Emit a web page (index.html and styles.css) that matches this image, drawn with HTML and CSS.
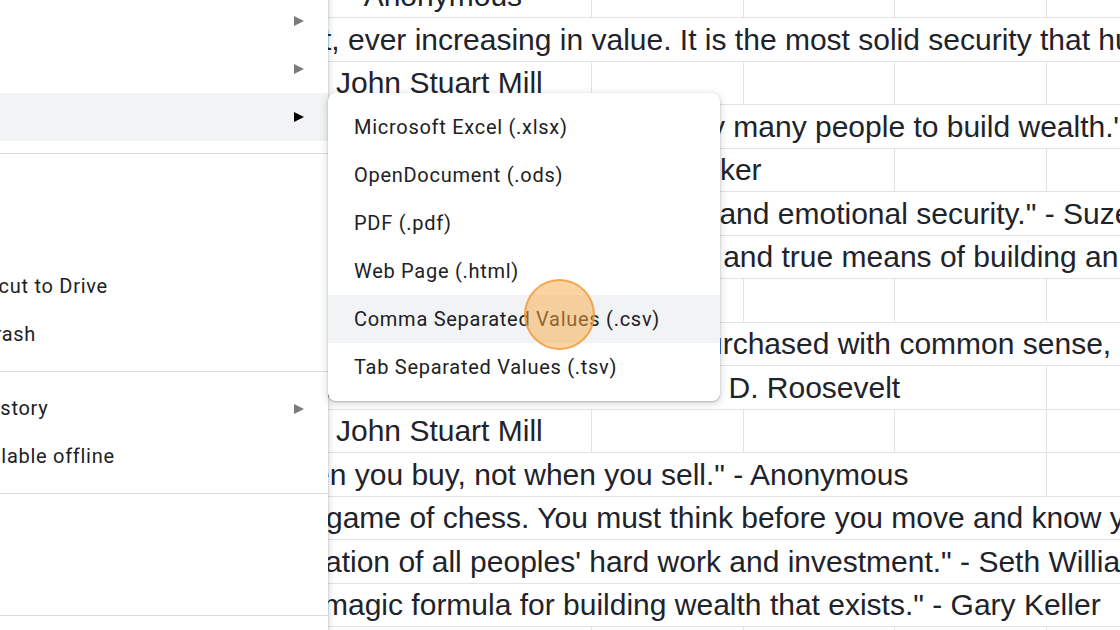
FILE: index.html
```html
<!DOCTYPE html>
<html lang="en">
<head>
<meta charset="utf-8">
<title>File menu – Download</title>
<link rel="stylesheet" href="styles.css">
</head>
<body>
<div class="app">
  <nav class="menu">
    <div class="sep"></div>
    <div class="item"><span>Share</span><svg class="arrow" viewBox="0 0 10 10"><polygon points="0,0 10,5 0,10"/></svg></div>
    <div class="item"><span>Email</span><svg class="arrow" viewBox="0 0 10 10"><polygon points="0,0 10,5 0,10"/></svg></div>
    <div class="item active"><span>Download</span><svg class="arrow" viewBox="0 0 10 10"><polygon points="0,0 10,5 0,10"/></svg></div>
    <div class="sep"></div>
    <div class="item"><span>Rename</span></div>
    <div class="item"><span>Move</span></div>
    <div class="item"><span>Add shortcut to Drive</span></div>
    <div class="item"><span>Move to trash</span></div>
    <div class="sep"></div>
    <div class="item"><span>Version history</span><svg class="arrow" viewBox="0 0 10 10"><polygon points="0,0 10,5 0,10"/></svg></div>
    <div class="item"><span>Make available offline</span></div>
    <div class="sep"></div>
    <div class="item"><span>Details</span></div>
    <div class="item"><span>Settings</span></div>
    <div class="sep"></div>
    <div class="item"><span>Print</span></div>
  </nav>

  <main class="sheet">
    <div class="row"><div class="cell s1"><span class="txt">" - Anonymous</span></div><div class="cell"></div><div class="cell"></div><div class="cell"></div><div class="cell"></div></div>
    <div class="row"><div class="cell s5"><span class="txt sh5">t, ever increasing in value. It is the most solid security that human ingenuity has devised." - Russell Sage</span></div></div>
    <div class="row"><div class="cell s1"><span class="txt pad8">John Stuart Mill</span></div><div class="cell"></div><div class="cell"></div><div class="cell"></div><div class="cell"></div></div>
    <div class="row"><div class="cell s5"><span class="txt">te investing has been used by many people to build wealth." - Robert Allen</span></div></div>
    <div class="row"><div class="cell s3"><span class="txt">may build wealth." - T. Harv Eker</span></div><div class="cell"></div><div class="cell"></div></div>
    <div class="row"><div class="cell s5"><span class="txt sh5">alth – both financial affluence and emotional security." - Suze Orman</span></div></div>
    <div class="row"><div class="cell s5"><span class="txt">y small scale, remains a tried and true means of building an individual's cash flow and wealth." - Robert Kiyosaki</span></div></div>
    <div class="row"><div class="cell"></div><div class="cell"></div><div class="cell"></div><div class="cell"></div><div class="cell"></div></div>
    <div class="row"><div class="cell s5"><span class="txt">nor can it be carried away. Purchased with common sense, paid for in full, and managed with reasonable care, it is about the safest investment in the world."</span></div></div>
    <div class="row"><div class="cell s4"><span class="txt sh2">safest in the world." - Franklin D. Roosevelt</span></div><div class="cell"></div></div>
    <div class="row"><div class="cell s1"><span class="txt pad8">John Stuart Mill</span></div><div class="cell"></div><div class="cell"></div><div class="cell"></div><div class="cell"></div></div>
    <div class="row"><div class="cell s4"><span class="txt sh15">en you buy, not when you sell." - Anonymous</span></div><div class="cell"></div></div>
    <div class="row"><div class="cell s5"><span class="txt sh2">game of chess. You must think before you move and know your next steps."</span></div></div>
    <div class="row"><div class="cell s5"><span class="txt sh3">ation of all peoples' hard work and investment." - Seth Williams</span></div></div>
    <div class="row"><div class="cell s5"><span class="txt sh5">magic formula for building wealth that exists." - Gary Keller</span></div></div>
    <div class="row"><div class="cell"></div><div class="cell"></div><div class="cell"></div><div class="cell"></div><div class="cell"></div></div>
  </main>

  <div class="submenu">
    <div class="sub-item">Microsoft Excel (.xlsx)</div>
    <div class="sub-item">OpenDocument (.ods)</div>
    <div class="sub-item">PDF (.pdf)</div>
    <div class="sub-item">Web Page (.html)</div>
    <div class="sub-item active">Comma Separated Values (.csv)</div>
    <div class="sub-item">Tab Separated Values (.tsv)</div>
  </div>

  <div class="click"></div>
</div>
</body>
</html>
```

FILE: styles.css
```css
* { box-sizing: border-box; }

html, body {
  margin: 0;
  padding: 0;
  background: #ffffff;
}

body {
  width: 1120px;
  height: 630px;
  overflow: hidden;
}

.app {
  position: relative;
  display: flex;
  align-items: flex-start;
  width: 1120px;
  height: 630px;
  overflow: hidden;
}

/* ---------- left File menu ---------- */
.menu {
  position: relative;
  z-index: 2;
  flex: 0 0 447px;
  margin: -29px 0 0 -119px;
  background: #ffffff;
  box-shadow: 0 2px 6px 2px rgba(60, 64, 67, 0.15), 0 1px 2px rgba(60, 64, 67, 0.3);
  font-family: Roboto, "Noto Sans", sans-serif;
  font-size: 20px;
  letter-spacing: 0.72px;
  color: #202124;
}

.item {
  display: flex;
  align-items: center;
  justify-content: space-between;
  height: 48px;
  padding: 0 24px;
  white-space: nowrap;
}

.item span { margin-top: -2px; }

.item.active { background: #f1f3f4; }

.arrow {
  width: 10px;
  height: 10px;
  fill: #7b7b7b;
}

.item.active .arrow { fill: #000000; }

.sep {
  height: 1px;
  background: #dadce0;
  margin: 12px 0 13px;
}

/* ---------- spreadsheet ---------- */
.sheet {
  flex: 1 1 auto;
  min-width: 0;
  margin-top: -25px;
  overflow: hidden;
  font-family: "Liberation Sans", Arial, sans-serif;
  font-size: 30px;
  color: #21232b;
}

.row {
  display: grid;
  grid-template-columns: 264px 152px 151px 152px 152px;
  height: 43px;
  border-bottom: 1px solid #e2e3e3;
}

.row:nth-child(even) { height: 44px; }

.cell {
  display: flex;
  align-items: flex-end;
  min-width: 0;
  padding-bottom: 4px;
  line-height: 34px;
  white-space: nowrap;
  border-right: 1px solid #e2e3e3;
}

.s1 { grid-column: span 1; }
.s3 { grid-column: span 3; }
.s4 { grid-column: span 4; }
.s5 { grid-column: span 5; }

.txt { flex: none; }
.pad8 { margin-left: 8px; }
.sh2 { margin-left: -2px; }
.sh3 { margin-left: -3px; }
.sh5 { margin-left: -5px; }
.sh15 { margin-left: -15px; }

/* ---------- Download submenu ---------- */
.submenu {
  position: absolute;
  z-index: 3;
  left: 328px;
  top: 93px;
  width: 392px;
  padding: 10px 0;
  background: #ffffff;
  border-radius: 8px;
  box-shadow: 0 2px 6px 2px rgba(60, 64, 67, 0.15), 0 1px 2px rgba(60, 64, 67, 0.3);
  font-family: Roboto, "Noto Sans", sans-serif;
  font-size: 20px;
  letter-spacing: 0.72px;
  color: #202124;
}

.sub-item {
  display: flex;
  align-items: center;
  height: 48px;
  padding-left: 26px;
  white-space: nowrap;
}

.sub-item.active { background: #f1f3f4; }

/* ---------- click marker ---------- */
.click {
  position: absolute;
  z-index: 4;
  left: 524px;
  top: 279px;
  width: 71px;
  height: 71px;
  border-radius: 50%;
  background: rgba(250, 170, 70, 0.5);
  border: 2px solid rgba(242, 150, 50, 0.75);
}
```
